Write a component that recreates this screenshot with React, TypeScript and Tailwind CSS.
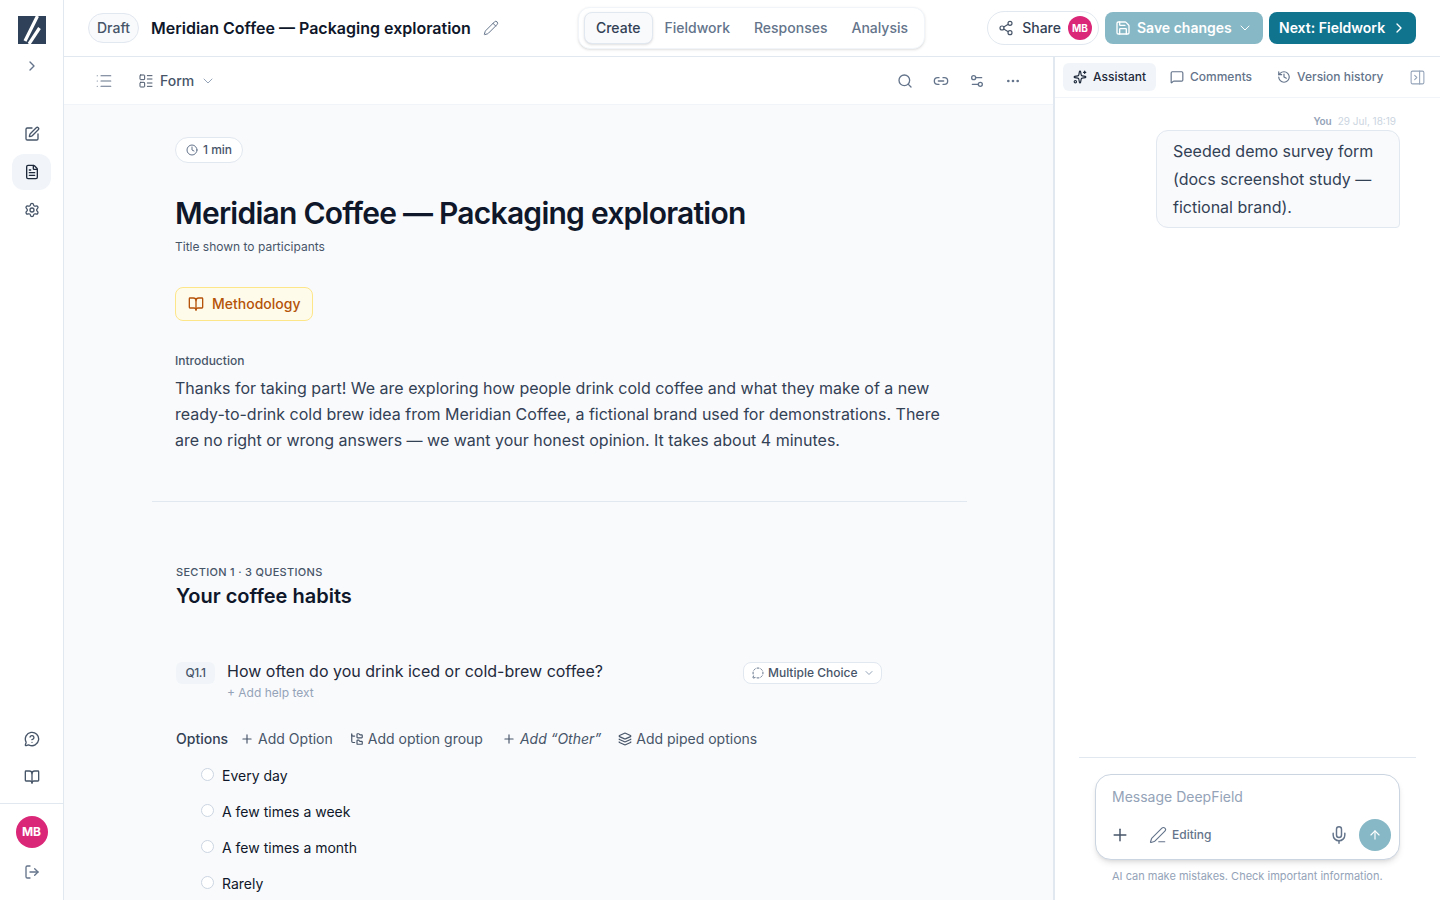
import {
  ArrowUp,
  BookOpen,
  ChevronDown,
  ChevronRight,
  Clock,
  Ellipsis,
  FileText,
  FolderTree,
  History,
  Layers,
  LayoutList,
  Link2,
  List,
  LogOut,
  MessageCircleDashed,
  MessageCircleQuestion,
  MessageSquare,
  Mic,
  PanelRightClose,
  Pencil,
  PenLine,
  Plus,
  Save,
  Search,
  Settings,
  Settings2,
  Share2,
  Sparkles,
  SquarePen,
} from "lucide-react"

function Sidebar() {
  return (
    <aside className="w-[64px] shrink-0 h-full flex flex-col items-center border-r border-[#e2e8f0] bg-white">
      <svg className="mt-4 w-7 h-7 shrink-0" viewBox="0 0 28 28">
        <rect width="28" height="28" fill="#2f4158" />
        <path d="M19.5 0 L7 25" stroke="#fff" strokeWidth="3.2" fill="none" />
        <path d="M21.5 12 L11 28" stroke="#fff" strokeWidth="3.2" fill="none" />
      </svg>
      <ChevronRight className="mt-[14px] w-4 h-4 text-[#64748b]" />
      <div className="mt-[42px] flex flex-col items-center gap-[2px]">
        <div className="w-[39px] h-9 flex items-center justify-center">
          <SquarePen className="w-4 h-4 text-[#475569]" />
        </div>
        <div className="w-[39px] h-9 flex items-center justify-center rounded-xl bg-[#f1f5f9]">
          <FileText className="w-4 h-4 text-[#1e293b]" />
        </div>
        <div className="w-[39px] h-9 flex items-center justify-center">
          <Settings className="w-4 h-4 text-[#475569]" />
        </div>
      </div>
      <div className="mt-auto flex flex-col items-center gap-[22px] pb-[18px]">
        <MessageCircleQuestion className="w-4 h-4 text-[#475569]" />
        <BookOpen className="w-4 h-4 text-[#475569]" />
      </div>
      <div className="w-full border-t border-[#e2e8f0] flex flex-col items-center pt-3 pb-[20px]">
        <div className="w-8 h-8 rounded-full bg-[#db2777] text-white text-xs font-bold flex items-center justify-center">
          MB
        </div>
        <LogOut className="mt-[16px] w-4 h-4 text-[#64748b]" />
      </div>
    </aside>
  )
}

function Header() {
  return (
    <header className="h-[57px] shrink-0 border-b border-[#e2e8f0] bg-white flex items-center pl-6 pr-6">
      <span className="h-[30px] px-2 flex items-center rounded-full border border-[#e2e8f0] bg-[#f8fafc] text-sm font-medium text-[#475569]">
        Draft
      </span>
      <h2 className="ml-3 text-base font-semibold text-[#0f172a] whitespace-nowrap">
        Meridian Coffee — Packaging exploration
      </h2>
      <Pencil className="ml-[12px] w-4 h-4 text-[#64748b]" strokeWidth={1.5} />

      <nav className="ml-[79px] h-[42px] flex items-center px-[5px] rounded-xl border border-[#f1f5f9] bg-white shadow-sm text-sm font-medium text-[#64748b]">
        <span className="h-8 pl-[11px] pr-3 flex items-center rounded-lg border border-[#e2e8f0] bg-[#f8fafc] text-[#334155] shadow-sm">
          Create
        </span>
        <span className="ml-[11px]">Fieldwork</span>
        <span className="ml-6">Responses</span>
        <span className="ml-6 mr-[11px]">Analysis</span>
      </nav>

      <div className="ml-auto flex items-center">
        <div className="h-[34px] pl-[10px] pr-[6px] flex items-center rounded-full border border-[#e2e8f0] bg-white text-sm font-medium text-[#334155]">
          <Share2 className="w-4 h-4 text-[#475569]" strokeWidth={1.75} />
          <span className="ml-2">Share</span>
          <span className="ml-[7px] w-6 h-6 rounded-full bg-[#db2777] text-white text-[10px] font-bold flex items-center justify-center">
            MB
          </span>
        </div>
        <button className="ml-[6px] h-8 w-[158px] pl-[10px] flex items-center rounded-lg bg-[#87b8c6] text-sm font-semibold text-white">
          <Save className="w-4 h-4" />
          <span className="ml-[6px]">Save changes</span>
          <ChevronDown className="ml-[5px] w-4 h-4" strokeWidth={1.5} />
        </button>
        <button className="ml-[6px] h-8 w-[147px] pl-[10px] flex items-center rounded-lg bg-[#10748f] text-sm font-semibold text-white">
          Next: Fieldwork
          <ChevronRight className="ml-[6px] w-4 h-4" />
        </button>
      </div>
    </header>
  )
}

function Toolbar() {
  return (
    <div className="h-[48px] shrink-0 border-b border-[#f1f5f9] bg-white flex items-center pl-[31px] pr-8">
      <List className="w-[18px] h-[18px] text-[#64748b]" strokeWidth={1.5} />
      <LayoutList className="ml-[25px] w-4 h-4 text-[#475569]" strokeWidth={1.5} />
      <span className="ml-[6px] text-sm font-medium text-[#475569]">Form</span>
      <ChevronDown className="ml-[6px] w-4 h-4 text-[#94a3b8]" strokeWidth={1.5} />
      <div className="ml-auto flex items-center gap-5 text-[#64748b]">
        <Search className="w-4 h-4" />
        <Link2 className="w-4 h-4" />
        <Settings2 className="w-4 h-4" />
        <Ellipsis className="w-4 h-4" />
      </div>
    </div>
  )
}

const options = ["Every day", "A few times a week", "A few times a month", "Rarely"]

function FormBody() {
  return (
    <div className="flex-1 min-h-0 overflow-hidden bg-[#f9fafc] pl-[88px] pr-[86px] pt-8">
      <div className="pl-[23px]">
        <span className="w-[68px] h-[26px] flex items-center justify-center gap-[5px] rounded-full border border-[#e2e8f0] bg-white text-xs font-medium text-[#475569]">
          <Clock className="w-3 h-3 text-[#64748b]" />
          1 min
        </span>
        <h1 className="mt-8 text-[30px] leading-[36px] font-semibold tracking-[-0.75px] text-[#0f172a] whitespace-nowrap">
          Meridian Coffee — Packaging exploration
        </h1>
        <p className="mt-2 text-xs leading-4 text-[#475569]">Title shown to participants</p>
        <div className="mt-8 w-[138px] h-[34px] pl-3 flex items-center gap-2 rounded-lg border border-[#fde68a] bg-[#fffbeb] text-sm font-medium text-[#b45309]">
          <BookOpen className="w-4 h-4" />
          Methodology
        </div>
        <p className="mt-[32px] text-xs leading-4 font-medium text-[#475569]">Introduction</p>
        <p className="mt-[6px] w-[780px] text-base leading-[26px] text-[#334155]">
          Thanks for taking part! We are exploring how people drink cold coffee and what they make of a new
          ready-to-drink cold brew idea from Meridian Coffee, a fictional brand used for demonstrations. There
          are no right or wrong answers — we want your honest opinion. It takes about 4 minutes.
        </p>
      </div>
      <div className="mt-[48px] border-t border-[#e2e8f0]" />

      <div className="pl-6">
        <p className="mt-[62px] text-[11px] leading-4 font-medium tracking-[0.3px] text-[#475569]">
          SECTION 1 · 3 QUESTIONS
        </p>
        <h3 className="mt-[2px] text-xl leading-7 font-semibold text-[#0f172a]">Your coffee habits</h3>

        <div className="mt-[50px] flex items-start">
          <span className="mt-[2px] w-[39px] h-[22px] flex items-center justify-center rounded-md bg-[#f1f5f9] text-xs font-medium tracking-[-0.4px] text-[#475569]">
            Q1.1
          </span>
          <div className="ml-3 w-[516px]">
            <p className="text-base leading-[22px] text-[#1e293b]">
              How often do you drink iced or cold-brew coffee?
            </p>
            <p className="mt-[3px] text-xs leading-4 text-[#94a3b8]">+ Add help text</p>
          </div>
          <span className="mt-[2px] h-[22px] w-[139px] pl-2 flex items-center gap-1 rounded-lg border border-[#e2e8f0] bg-white text-xs font-medium text-[#475569]">
            <MessageCircleDashed className="w-3 h-3 text-[#64748b]" />
            Multiple Choice
            <ChevronDown className="ml-[2px] w-3 h-3 text-[#94a3b8]" />
          </span>
        </div>

        <div className="mt-[26px] flex items-center h-6 text-sm text-[#475569]">
          <span className="font-medium text-[#334155]">Options</span>
          <Plus className="ml-[12px] w-[14px] h-[14px]" />
          <span className="ml-[4px]">Add Option</span>
          <FolderTree className="ml-[17px] w-[14px] h-[14px]" />
          <span className="ml-[4px]">Add option group</span>
          <Plus className="ml-[19px] w-[14px] h-[14px]" />
          <span className="ml-[4px] italic">Add “Other”</span>
          <Layers className="ml-[17px] w-[14px] h-[14px]" />
          <span className="ml-[4px]">Add piped options</span>
        </div>

        <ul className="mt-[7px]">
          {options.map((o) => (
            <li key={o} className="h-9 pl-[25px] flex items-center gap-[8px] text-sm text-[#0f172a]">
              <span className="w-[13px] h-[13px] mb-[3px] rounded-full border border-[#cbd5e1] bg-white" />
              {o}
            </li>
          ))}
        </ul>
      </div>
    </div>
  )
}

function AssistantPanel() {
  return (
    <aside className="w-[387px] shrink-0 h-full border-l-2 border-[#e2e8f0] bg-white flex flex-col">
      <div className="h-[41px] shrink-0 border-b border-[#f1f5f9] flex items-center pl-2 pr-[14px] text-xs font-medium text-[#64748b]">
        <span className="h-7 w-[93px] pl-[10px] flex items-center gap-[6px] rounded-md bg-[#f1f5f9] text-[#1e293b]">
          <Sparkles className="w-[14px] h-[14px]" />
          Assistant
        </span>
        <span className="ml-[14px] flex items-center gap-[6px]">
          <MessageSquare className="w-[14px] h-[14px]" />
          Comments
        </span>
        <span className="ml-[25px] flex items-center gap-[6px]">
          <History className="w-[14px] h-[14px]" />
          Version history
        </span>
        <PanelRightClose className="ml-auto w-[17px] h-[17px] text-[#94a3b8]" strokeWidth={1.5} />
      </div>

      <div className="flex-1 min-h-0 pr-10 pt-[16px] flex flex-col items-end">
        <div className="text-[10px] leading-[14px] pr-[4px] text-[#cbd5e1]">
          <span className="font-semibold text-[#94a3b8]">You</span>
          <span className="ml-[6px]">29 Jul, 18:19</span>
        </div>
        <div className="mt-[2px] w-[244px] rounded-xl rounded-br-sm border border-[#e2e8f0] bg-[#f8fafc] pl-4 py-[6px] text-base leading-7 text-[#334155]">
          Seeded demo survey form (docs screenshot study — fictional brand).
        </div>
      </div>

      <div className="mx-6 border-t border-[#e2e8f0] pt-4 pb-4 pl-4 pr-4 w-[337px]">
        <div className="w-[305px] h-[86px] rounded-2xl border border-[#cbd5e1] bg-white shadow-md pl-4 pr-2 pt-[12px]">
          <p className="text-sm leading-5 text-[#94a3b8]">Message DeepField</p>
          <div className="mt-[12px] flex items-center">
            <Plus className="-ml-[2px] w-5 h-5 text-[#475569]" strokeWidth={1.75} />
            <PenLine className="ml-[19px] w-[18px] h-[18px] text-[#64748b]" strokeWidth={1.5} />
            <span className="ml-[5px] text-xs font-medium text-[#64748b]">Editing</span>
            <Mic className="ml-auto w-5 h-5 text-[#64748b]" strokeWidth={1.75} />
            <span className="ml-[10px] w-8 h-8 rounded-full bg-[#87b8c6] flex items-center justify-center">
              <ArrowUp className="w-[14px] h-[14px] text-white" />
            </span>
          </div>
        </div>
        <p className="mt-2 whitespace-nowrap pl-[17px] text-[11px] leading-4 text-[#94a3b8]">
          AI can make mistakes. Check important information.
        </p>
      </div>
    </aside>
  )
}

export default function App() {
  return (
    <div className="h-screen w-full overflow-hidden flex font-['Inter',sans-serif] bg-white">
      <Sidebar />
      <div className="flex-1 min-w-0 h-full flex flex-col">
        <Header />
        <div className="flex-1 min-h-0 flex">
          <main className="flex-1 min-w-0 flex flex-col">
            <Toolbar />
            <FormBody />
          </main>
          <AssistantPanel />
        </div>
      </div>
    </div>
  )
}
